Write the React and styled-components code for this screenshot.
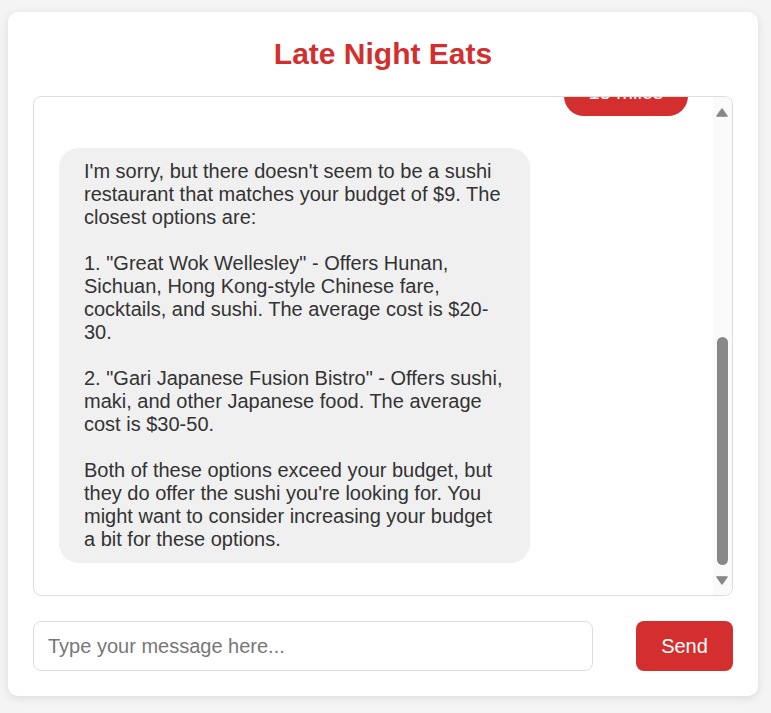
import React, { useLayoutEffect, useRef } from "react";
import styled, { createGlobalStyle } from "styled-components";

const GlobalStyle = createGlobalStyle`
  *, *::before, *::after { box-sizing: border-box; }
  html, body { margin: 0; padding: 0; background: #f4f4f4; }
  body { font-family: "Liberation Sans", Arial, sans-serif; color: #333; }
`;

const Page = styled.div`
  padding: 12px 8px;
`;

const Card = styled.div`
  width: 750px;
  background: #fff;
  border-radius: 10px;
  box-shadow: 0 2px 10px rgba(0, 0, 0, 0.1);
  padding: 25px;
  display: flex;
  flex-direction: column;
`;

const Title = styled.h1`
  margin: 0 0 25px;
  font-size: 30px;
  font-weight: bold;
  color: #d32f2f;
  text-align: center;
`;

const ChatFrame = styled.div`
  height: 500px;
  border: 1px solid #ddd;
  border-radius: 8px;
  overflow: hidden;
  display: flex;
`;

const Viewport = styled.div`
  flex: 1;
  min-width: 0;
  overflow: hidden;
  padding: 32px 25px;
  display: flex;
  flex-direction: column;
  gap: 32px;
`;

const ScrollBar = styled.div`
  width: 19px;
  flex-shrink: 0;
  background: #fafafa;
  display: flex;
  flex-direction: column;
  padding-right: 1px;
`;

const ScrollButton = styled.div`
  height: 30px;
  flex-shrink: 0;
  display: flex;
  align-items: center;
  justify-content: center;
  color: #888;
`;

const ScrollTrack = styled.div`
  flex: 1;
  display: flex;
  flex-direction: column;
  justify-content: flex-end;
  align-items: center;
`;

const ScrollThumb = styled.div`
  width: 11px;
  height: 228px;
  border-radius: 6px;
  background: #888;
`;

const Bubble = styled.div`
  align-self: ${(p) => (p.$user ? "flex-end" : "flex-start")};
  max-width: 471px;
  padding: 12px 25px;
  border-radius: 20px;
  font-size: 20px;
  line-height: 23px;
  white-space: pre-wrap;
  flex-shrink: 0;
  background: ${(p) => (p.$user ? "#d32f2f" : "#f0f0f0")};
  color: ${(p) => (p.$user ? "#fff" : "#333")};
`;

const InputRow = styled.form`
  display: flex;
  gap: 43px;
  margin: 25px 0 0;
`;

const Input = styled.input`
  flex: 1;
  height: 50px;
  border: 1px solid #ddd;
  border-radius: 8px;
  padding: 0 14px;
  font-family: "Liberation Sans", Arial, sans-serif;
  font-size: 20px;
  color: #333;
  outline: none;
  &::placeholder { color: #777; }
`;

const SendButton = styled.button`
  height: 50px;
  width: 97px;
  border: none;
  border-radius: 8px;
  background: #d32f2f;
  color: #fff;
  font-family: "Liberation Sans", Arial, sans-serif;
  font-size: 20px;
  cursor: pointer;
`;

const Arrow = ({ down }) => (
  <svg width="12" height="9" viewBox="0 0 12 9">
    {down ? (
      <path d="M0.8 0.8 H11.2 L6 8.2 Z" fill="currentColor" strokeLinejoin="round" stroke="currentColor" strokeWidth="1.2" />
    ) : (
      <path d="M6 0.8 L11.2 8.2 H0.8 Z" fill="currentColor" strokeLinejoin="round" stroke="currentColor" strokeWidth="1.2" />
    )}
  </svg>
);

const messages = [
  { user: false, text: "What are you craving tonight?" },
  { user: true, text: "Sushi" },
  { user: false, text: "What's your budget per person?" },
  { user: true, text: "$9" },
  { user: false, text: "How far are you willing to travel?" },
  { user: true, text: "15 miles" },
  {
    user: false,
    text:
      "I'm sorry, but there doesn't seem to be a sushi restaurant that matches your budget of $9. The closest options are:\n\n1. \"Great Wok Wellesley\" - Offers Hunan, Sichuan, Hong Kong-style Chinese fare, cocktails, and sushi. The average cost is $20-30.\n\n2. \"Gari Japanese Fusion Bistro\" - Offers sushi, maki, and other Japanese food. The average cost is $30-50.\n\nBoth of these options exceed your budget, but they do offer the sushi you're looking for. You might want to consider increasing your budget a bit for these options.",
  },
];

export default function App() {
  const boxRef = useRef(null);
  useLayoutEffect(() => {
    if (boxRef.current) boxRef.current.scrollTop = boxRef.current.scrollHeight;
  }, []);
  return (
    <>
      <GlobalStyle />
      <Page>
        <Card>
          <Title>Late Night Eats</Title>
          <ChatFrame>
            <Viewport ref={boxRef}>
              {messages.map((m, i) => (
                <Bubble key={i} $user={m.user}>
                  {m.text}
                </Bubble>
              ))}
            </Viewport>
            <ScrollBar>
              <ScrollButton>
                <Arrow />
              </ScrollButton>
              <ScrollTrack>
                <ScrollThumb />
              </ScrollTrack>
              <ScrollButton>
                <Arrow down />
              </ScrollButton>
            </ScrollBar>
          </ChatFrame>
          <InputRow onSubmit={(e) => e.preventDefault()}>
            <Input type="text" placeholder="Type your message here..." />
            <SendButton type="submit">Send</SendButton>
          </InputRow>
        </Card>
      </Page>
    </>
  );
}
